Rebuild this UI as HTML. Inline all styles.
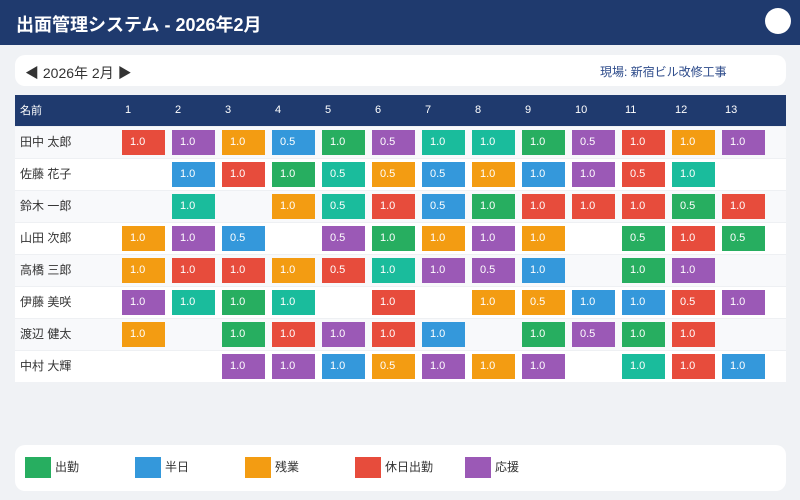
<!DOCTYPE html>
<html><head><meta charset="utf-8"><style>
*{margin:0;padding:0;box-sizing:border-box}
body{width:800px;height:500px;background:#f0f2f5;font-family:"Liberation Sans","Noto Sans CJK JP",sans-serif;position:relative;overflow:hidden}
.hd{position:absolute;left:0;top:0;width:800px;height:45px;background:#1f3a6e;color:#fff;font-weight:bold;font-size:18px;line-height:50px;padding-left:16px}
.av{position:absolute;left:765px;top:8px;width:26px;height:26px;border-radius:50%;background:#fff}
.nav{position:absolute;left:15px;top:55px;width:771px;height:31px;background:#fff;border-radius:10px}
.nav .m{position:absolute;left:10px;top:8px;font-size:14px;color:#333}
.nav .s{position:absolute;left:585px;top:8px;font-size:12px;color:#2c4a8a}
table{position:absolute;left:15px;top:95px;width:771px;border-collapse:collapse;table-layout:fixed}
th{background:#1f3a6e;color:#fff;font-weight:normal;font-size:11px;text-align:left;height:31px;padding-left:5px}
td{height:32px;padding:0;border-top:1px solid #eef0f3;font-size:12px;color:#333;vertical-align:top}
td.n{padding-left:5px;line-height:31px}
tr:nth-child(even) td{background:#f8f9fb}
tr:nth-child(odd) td{background:#fff}
td b{display:block;width:43px;height:25px;margin:3px 0 0 2px;color:#fff;font-weight:normal;font-size:11px;line-height:25px;padding-left:8px}
.G{background:#27ae60!important}.B{background:#3498db!important}.O{background:#f39c12!important}.R{background:#e74c3c!important}.P{background:#9b59b6!important}.T{background:#1abc9c!important}
.lg{position:absolute;left:15px;top:445px;width:771px;height:46px;background:#fff;border-radius:10px}
.li{position:absolute;top:12px;font-size:12px;color:#333;line-height:21px}
.li i{display:inline-block;width:26px;height:21px;vertical-align:top;margin-right:4px}
</style></head><body>
<div class="hd">出面管理システム - 2026年2月</div><div class="av"></div>
<div class="nav"><span class="m">◀ 2026年 2月 ▶</span><span class="s">現場: 新宿ビル改修工事</span></div>
<table>
<colgroup><col style="width:105px"><col span="13" style="width:50px"><col style="width:16px"></colgroup>
<tr><th>名前</th><th>1</th><th>2</th><th>3</th><th>4</th><th>5</th><th>6</th><th>7</th><th>8</th><th>9</th><th>10</th><th>11</th><th>12</th><th>13</th><th></th></tr>
<tr><td class="n">田中 太郎</td><td><b class="R">1.0</b></td><td><b class="P">1.0</b></td><td><b class="O">1.0</b></td><td><b class="B">0.5</b></td><td><b class="G">1.0</b></td><td><b class="P">0.5</b></td><td><b class="T">1.0</b></td><td><b class="T">1.0</b></td><td><b class="G">1.0</b></td><td><b class="P">0.5</b></td><td><b class="R">1.0</b></td><td><b class="O">1.0</b></td><td><b class="P">1.0</b></td><td></td></tr>
<tr><td class="n">佐藤 花子</td><td></td><td><b class="B">1.0</b></td><td><b class="R">1.0</b></td><td><b class="G">1.0</b></td><td><b class="T">0.5</b></td><td><b class="O">0.5</b></td><td><b class="B">0.5</b></td><td><b class="O">1.0</b></td><td><b class="B">1.0</b></td><td><b class="P">1.0</b></td><td><b class="R">0.5</b></td><td><b class="T">1.0</b></td><td></td><td></td></tr>
<tr><td class="n">鈴木 一郎</td><td></td><td><b class="T">1.0</b></td><td></td><td><b class="O">1.0</b></td><td><b class="T">0.5</b></td><td><b class="R">1.0</b></td><td><b class="B">0.5</b></td><td><b class="G">1.0</b></td><td><b class="R">1.0</b></td><td><b class="R">1.0</b></td><td><b class="R">1.0</b></td><td><b class="G">0.5</b></td><td><b class="R">1.0</b></td><td></td></tr>
<tr><td class="n">山田 次郎</td><td><b class="O">1.0</b></td><td><b class="P">1.0</b></td><td><b class="B">0.5</b></td><td></td><td><b class="P">0.5</b></td><td><b class="G">1.0</b></td><td><b class="O">1.0</b></td><td><b class="P">1.0</b></td><td><b class="O">1.0</b></td><td></td><td><b class="G">0.5</b></td><td><b class="R">1.0</b></td><td><b class="G">0.5</b></td><td></td></tr>
<tr><td class="n">高橋 三郎</td><td><b class="O">1.0</b></td><td><b class="R">1.0</b></td><td><b class="R">1.0</b></td><td><b class="O">1.0</b></td><td><b class="R">0.5</b></td><td><b class="T">1.0</b></td><td><b class="P">1.0</b></td><td><b class="P">0.5</b></td><td><b class="B">1.0</b></td><td></td><td><b class="G">1.0</b></td><td><b class="P">1.0</b></td><td></td><td></td></tr>
<tr><td class="n">伊藤 美咲</td><td><b class="P">1.0</b></td><td><b class="T">1.0</b></td><td><b class="G">1.0</b></td><td><b class="T">1.0</b></td><td></td><td><b class="R">1.0</b></td><td></td><td><b class="O">1.0</b></td><td><b class="O">0.5</b></td><td><b class="B">1.0</b></td><td><b class="B">1.0</b></td><td><b class="R">0.5</b></td><td><b class="P">1.0</b></td><td></td></tr>
<tr><td class="n">渡辺 健太</td><td><b class="O">1.0</b></td><td></td><td><b class="G">1.0</b></td><td><b class="R">1.0</b></td><td><b class="P">1.0</b></td><td><b class="R">1.0</b></td><td><b class="B">1.0</b></td><td></td><td><b class="G">1.0</b></td><td><b class="P">0.5</b></td><td><b class="G">1.0</b></td><td><b class="R">1.0</b></td><td></td><td></td></tr>
<tr><td class="n">中村 大輝</td><td></td><td></td><td><b class="P">1.0</b></td><td><b class="P">1.0</b></td><td><b class="B">1.0</b></td><td><b class="O">0.5</b></td><td><b class="P">1.0</b></td><td><b class="O">1.0</b></td><td><b class="P">1.0</b></td><td></td><td><b class="T">1.0</b></td><td><b class="R">1.0</b></td><td><b class="B">1.0</b></td><td></td></tr>
</table>
<div class="lg">
<div class="li" style="left:10px"><i class="G"></i>出勤</div>
<div class="li" style="left:120px"><i class="B"></i>半日</div>
<div class="li" style="left:230px"><i class="O"></i>残業</div>
<div class="li" style="left:340px"><i class="R"></i>休日出勤</div>
<div class="li" style="left:450px"><i class="P"></i>応援</div>
</div>
</body></html>
